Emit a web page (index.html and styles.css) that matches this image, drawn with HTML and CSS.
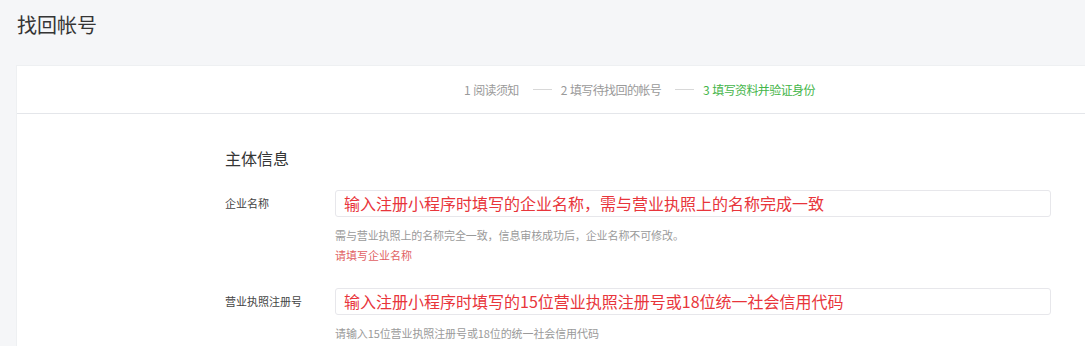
FILE: index.html
```html
<!DOCTYPE html>
<html lang="zh-CN">
<head>
<meta charset="utf-8">
<title>找回帐号</title>
<link rel="stylesheet" href="styles.css">
</head>
<body>
<div class="header">找回帐号</div>
<div class="card">
  <div class="steps">
    <span class="step">1 阅读须知</span>
    <span class="sep"></span>
    <span class="step">2 填写待找回的帐号</span>
    <span class="sep"></span>
    <span class="step current">3 填写资料并验证身份</span>
  </div>
  <div class="form">
    <h3 class="section-title">主体信息</h3>
    <div class="row">
      <label class="label">企业名称</label>
      <div class="field">
        <div class="input">输入注册小程序时填写的企业名称，需与营业执照上的名称完成一致</div>
        <div class="tips">需与营业执照上的名称完全一致，信息审核成功后，企业名称不可修改。</div>
        <div class="error">请填写企业名称</div>
      </div>
    </div>
    <div class="row">
      <label class="label">营业执照注册号</label>
      <div class="field">
        <div class="input">输入注册小程序时填写的15位营业执照注册号或18位统一社会信用代码</div>
        <div class="tips">请输入15位营业执照注册号或18位的统一社会信用代码</div>
      </div>
    </div>
  </div>
</div>
</body>
</html>
```
FILE: styles.css
```css
* { box-sizing: border-box; }
html, body { margin: 0; padding: 0; }
body {
  background: #f5f6f8;
  font-family: "Noto Sans CJK SC", "Noto Sans", sans-serif;
  color: #353535;
  overflow: hidden;
  height: 346px;
}
.header {
  height: 65px;
  padding: 11px 0 0 17px;
  font-size: 20px;
  line-height: 28px;
  color: #353535;
}
.card {
  margin-left: 16px;
  background: #fff;
  border-left: 1px solid #eef0f2;
  border-top: 1px solid #eef0f2;
  height: 281px;
  overflow: hidden;
}
.steps {
  height: 48px;
  border-bottom: 1px solid #e4e6ea;
  display: flex;
  align-items: center;
  padding-left: 447px;
  font-size: 12px;
  color: #9a9a9a;
}
.step { white-space: nowrap; letter-spacing: -0.6px; word-spacing: 1px; }
.step.current { color: #44b549; }
.sep {
  width: 19px;
  height: 1px;
  background: #d8d8d8;
  margin: 0 9px 0 14px;
}
.form {
  padding: 32px 0 0 208px;
}
.section-title {
  margin: 0;
  font-size: 16px;
  font-weight: normal;
  line-height: 24px;
  color: #353535;
}
.row {
  display: flex;
  margin-top: 20px;
}
.row + .row { margin-top: 23px; }
.label {
  width: 110px;
  flex: none;
  font-size: 11px;
  line-height: 27px;
  color: #444;
}
.field { width: 716px; }
.input {
  height: 27px;
  border: 1px solid #e7e7eb;
  border-radius: 3px;
  padding-left: 8px;
  font-size: 16px;
  line-height: 25px;
  color: #e8353b;
  white-space: nowrap;
}
.tips {
  margin-top: 8px;
  font-size: 11px;
  line-height: 20px;
  color: #9a9a9a;
  letter-spacing: -0.1px;
}
.error {
  font-size: 11px;
  line-height: 20px;
  color: #e15f63;
}
```
